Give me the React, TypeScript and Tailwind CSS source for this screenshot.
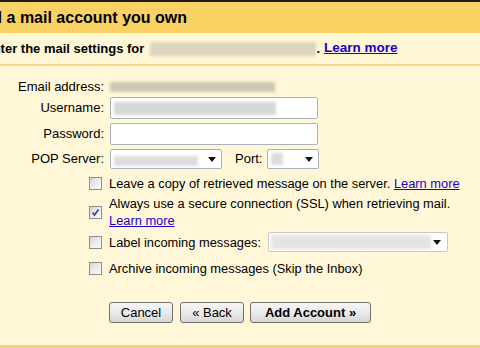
import React from "react";

const font = "font-['Liberation_Sans',Arial,sans-serif]";

/* small black dropdown triangle */
function Caret() {
  return (
    <svg width="8" height="5" viewBox="0 0 8 5" className="shrink-0">
      <path d="M0 0h8L4 5z" fill="#111" />
    </svg>
  );
}

/* blurred placeholder for hidden values */
function Smudge({ className }: { className: string }) {
  return <span className={`block blur-[1.5px] ${className}`} />;
}

function Box({ checked = false }: { checked?: boolean }) {
  return (
    <span className="flex h-[13px] w-[13px] shrink-0 items-center justify-center border border-[#8e8f8f] bg-gradient-to-br from-[#d4d4d4] via-[#ececec] to-[#fafafa]">
      {checked && (
        <svg width="9" height="9" viewBox="0 0 9 9">
          <path d="M1.5 4.5l2 2.5L7.5 1.5" fill="none" stroke="#3b4ca8" strokeWidth="1.8" />
        </svg>
      )}
    </span>
  );
}

function Label({ children }: { children: React.ReactNode }) {
  return <span className="w-[104px] shrink-0 text-right">{children}</span>;
}

function Button({ children, className = "" }: { children: React.ReactNode; className?: string }) {
  return (
    <button
      className={`flex h-[21px] items-center justify-center rounded-[3px] border border-[#707070] bg-gradient-to-b from-[#f6f6f6] via-[#ebebeb] to-[#d6d6d6] text-[13px] text-black ${className}`}
    >
      {children}
    </button>
  );
}

export default function App() {
  return (
    <div className={`${font} flex h-[348px] w-[480px] flex-col overflow-hidden bg-[#fff7d7] text-[13px] text-black`}>
      <div className="h-[2px] shrink-0 bg-[#1b1b1b]" />

      {/* Title bar */}
      <div className="flex h-[31px] shrink-0 items-center bg-[#fad163]">
        <h1 className="-ml-[29px] whitespace-nowrap text-[16px] font-bold leading-none">
          Add a mail account you own
        </h1>
      </div>

      {/* Sub heading */}
      <div className="flex h-[31px] shrink-0 items-center whitespace-nowrap bg-[#fff6d6] font-bold">
        <span className="-ml-[16px]">Enter the mail settings for</span>
        <Smudge className="ml-[6px] h-[14px] w-[166px] bg-[#dcd5c0]" />
        <span>.</span>
        <a href="#" className="ml-[4px] text-[13.5px] text-[#2200cc] underline">
          Learn more
        </a>
      </div>
      <div className="h-[2px] shrink-0 bg-[#f4da8a]" />

      {/* Form */}
      <div className="flex flex-1 flex-col pt-[10px]">
        <div className="flex h-[21px] items-center">
          <Label>Email address:</Label>
          <Smudge className="ml-[6px] h-[10px] w-[165px] bg-[#cfc8b6]" />
        </div>

        <div className="flex h-[22px] items-center">
          <Label>Username:</Label>
          <div className="ml-[6px] flex h-[22px] w-[208px] items-center rounded-[2px] border border-[#a7b2bc] bg-white px-[3px]">
            <Smudge className="h-[13px] w-[162px] bg-[#d8d8d8]" />
          </div>
        </div>

        <div className="mt-[4px] flex h-[22px] items-center">
          <Label>Password:</Label>
          <div className="ml-[6px] h-[22px] w-[208px] rounded-[2px] border border-[#a7b2bc] bg-white" />
        </div>

        <div className="mt-[4px] flex h-[20px] items-center">
          <Label>POP Server:</Label>
          <div className="ml-[6px] flex h-[20px] w-[112px] items-center justify-between rounded-[2px] border border-[#a7b2bc] bg-white pl-[3px] pr-[5px]">
            <Smudge className="mt-[4px] h-[10px] w-[84px] bg-[#dedede]" />
            <Caret />
          </div>
          <span className="ml-[13px]">Port:</span>
          <div className="ml-[5px] flex h-[20px] w-[52px] items-center justify-between rounded-[2px] border border-[#a7b2bc] bg-white pl-[3px] pr-[5px]">
            <Smudge className="h-[12px] w-[12px] bg-[#dcdcdc]" />
            <Caret />
          </div>
        </div>

        {/* Options */}
        <div className="mt-[6px] flex flex-col pl-[89px] text-[12.85px] leading-[17px]">
          <div className="flex items-center gap-[7px]">
            <Box />
            <span>
              Leave a copy of retrieved message on the server.{" "}
              <a href="#" className="text-[#2200cc] underline">
                Learn more
              </a>
            </span>
          </div>

          <div className="mt-[3px] flex items-center gap-[7px]">
            <Box checked />
            <span className="pr-[10px]">
              Always use a secure connection (SSL) when retrieving mail.{" "}
              <a href="#" className="text-[#2200cc] underline">
                Learn more
              </a>
            </span>
          </div>

          <div className="mt-[3px] flex h-[20px] items-center gap-[7px]">
            <Box />
            <span className="whitespace-nowrap">Label incoming messages:</span>
            <div className="flex h-[20px] w-[180px] items-center justify-between rounded-[2px] border border-[#c9c9c9] bg-white pl-[2px] pr-[6px]">
              <Smudge className="h-[14px] w-[160px] bg-[#e4e4e4]" />
              <Caret />
            </div>
          </div>

          <div className="mt-[8px] flex items-center gap-[7px]">
            <Box />
            <span>Archive incoming messages (Skip the Inbox)</span>
          </div>
        </div>

        {/* Actions */}
        <div className="mt-[25px] flex gap-[6px] pl-[109px]">
          <Button className="w-[64px]">Cancel</Button>
          <Button className="ml-[1px] w-[64px]">« Back</Button>
          <Button className="w-[121px] font-bold">Add Account »</Button>
        </div>
      </div>

      <div className="h-[3px] shrink-0 bg-[#f3d37a]" />
    </div>
  );
}
